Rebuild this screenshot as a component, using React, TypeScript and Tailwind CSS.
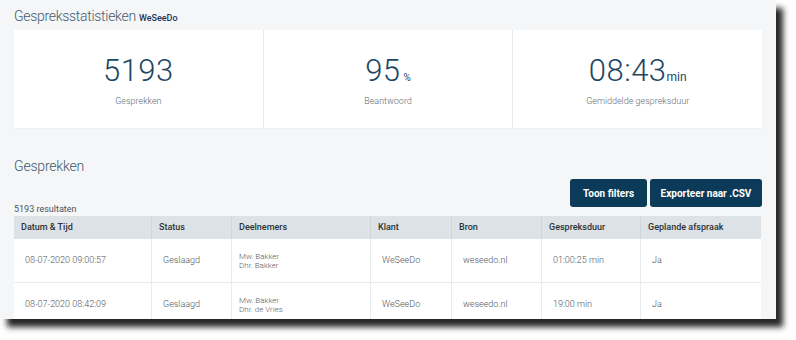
import React from "react";

const cols = [
  { label: "Datum & Tijd", w: "w-[137px]" },
  { label: "Status", w: "w-[80px]" },
  { label: "Deelnemers", w: "w-[139px]" },
  { label: "Klant", w: "w-[81px]" },
  { label: "Bron", w: "w-[90px]" },
  { label: "Gespreksduur", w: "w-[99px]" },
  { label: "Geplande afspraak", w: "w-[121px]" },
];

const rows = [
  ["08-07-2020 09:00:57", "Geslaagd", ["Mw. Bakker", "Dhr. Bakker"], "WeSeeDo", "weseedo.nl", "01:00:25 min", "Ja"],
  ["08-07-2020 08:42:09", "Geslaagd", ["Mw. Bakker", "Dhr. de Vries"], "WeSeeDo", "weseedo.nl", "19:00 min", "Ja"],
];

function Stat({ value, unit, unitClass, label, first }: { value: string; unit?: string; unitClass?: string; label: string; first?: boolean }) {
  return (
    <div className={"flex-1 flex flex-col items-center pt-[21px] " + (first ? "" : "border-l border-[#e8ebee]")}>
      <div className="flex items-baseline text-[#1c4763]">
        <span className="text-[31px] font-light leading-[40px] tracking-[0.5px]">{value}</span>
        {unit && <span className={unitClass}>{unit}</span>}
      </div>
      <div className="mt-[4px] text-[9px] leading-[12px] font-light text-[#5f6d77]">{label}</div>
    </div>
  );
}

export default function App() {
  return (
    <div className="w-[796px] h-[340px] bg-white" style={{ fontFamily: "Roboto, 'Liberation Sans', sans-serif" }}>
      <div className="w-[776px] h-[319px] bg-[#f5f6f8] shadow-[7px_8px_6px_rgba(0,0,0,0.85)] overflow-hidden px-[14px]">
        <div className="h-[30px] flex items-end pb-[5px]">
          <span className="text-[14px] leading-[17px] font-light text-[#3f5a6d] tracking-[-0.3px]">Gespreksstatistieken</span>
          <span className="ml-[3px] text-[9px] leading-[12px] font-medium text-[#1e3556] mb-[1px]">WeSeeDo</span>
        </div>
        <div className="h-[98px] bg-white flex shadow-[0_1px_2px_rgba(0,0,0,0.04)]">
          <Stat first value="5193" label="Gesprekken" />
          <Stat value="95" unit="%" unitClass="ml-[3px] text-[10px]" label="Beantwoord" />
          <Stat value="08:43" unit="min" unitClass="text-[12px]" label="Gemiddelde gespreksduur" />
        </div>
        <div className="pt-[26px] h-[51px]">
          <span className="text-[14px] leading-[17px] font-light text-[#3f5a6d] tracking-[-0.2px]">Gesprekken</span>
        </div>
        <div className="flex items-end justify-between">
          <div className="text-[9px] leading-[12px] text-[#4a5560] pb-[1px]">5193 resultaten</div>
          <div className="flex gap-[3px] pb-[9px]">
            <button className="w-[77px] h-[28px] rounded-[3px] bg-[#0b3b58] text-white text-[10px] font-bold">Toon filters</button>
            <button className="w-[112px] h-[28px] rounded-[3px] bg-[#0b3b58] text-white text-[10px] font-bold">Exporteer naar .CSV</button>
          </div>
        </div>
        <div className="w-[747px] bg-white">
          <div className="flex h-[23px] bg-[#dde2e6]">
            {cols.map((c, i) => (
              <div key={c.label} className={c.w + " flex items-center pl-[7px] text-[9px] font-medium text-[#2d3236] " + (i > 0 ? "border-l border-[#cfd6db]" : "")}>
                {c.label}
              </div>
            ))}
          </div>
          {rows.map((r, ri) => (
            <div key={ri} className="flex h-[44px] border-b border-[#e7ebee]">
              {r.map((cell, ci) => (
                <div key={ci} className={cols[ci].w + " flex items-center text-[9px] font-light text-[#4e565c] " + (ci === 2 ? "pl-[7px] " : "pl-[11px] ") + (ci > 0 ? "border-l border-[#e7ebee]" : "")}>
                  {Array.isArray(cell) ? (
                    <div className="flex flex-col text-[8px] leading-[9px] text-[#5a6167]">
                      {cell.map((n) => (
                        <span key={n}>{n}</span>
                      ))}
                    </div>
                  ) : (
                    cell
                  )}
                </div>
              ))}
            </div>
          ))}
        </div>
      </div>
    </div>
  );
}
